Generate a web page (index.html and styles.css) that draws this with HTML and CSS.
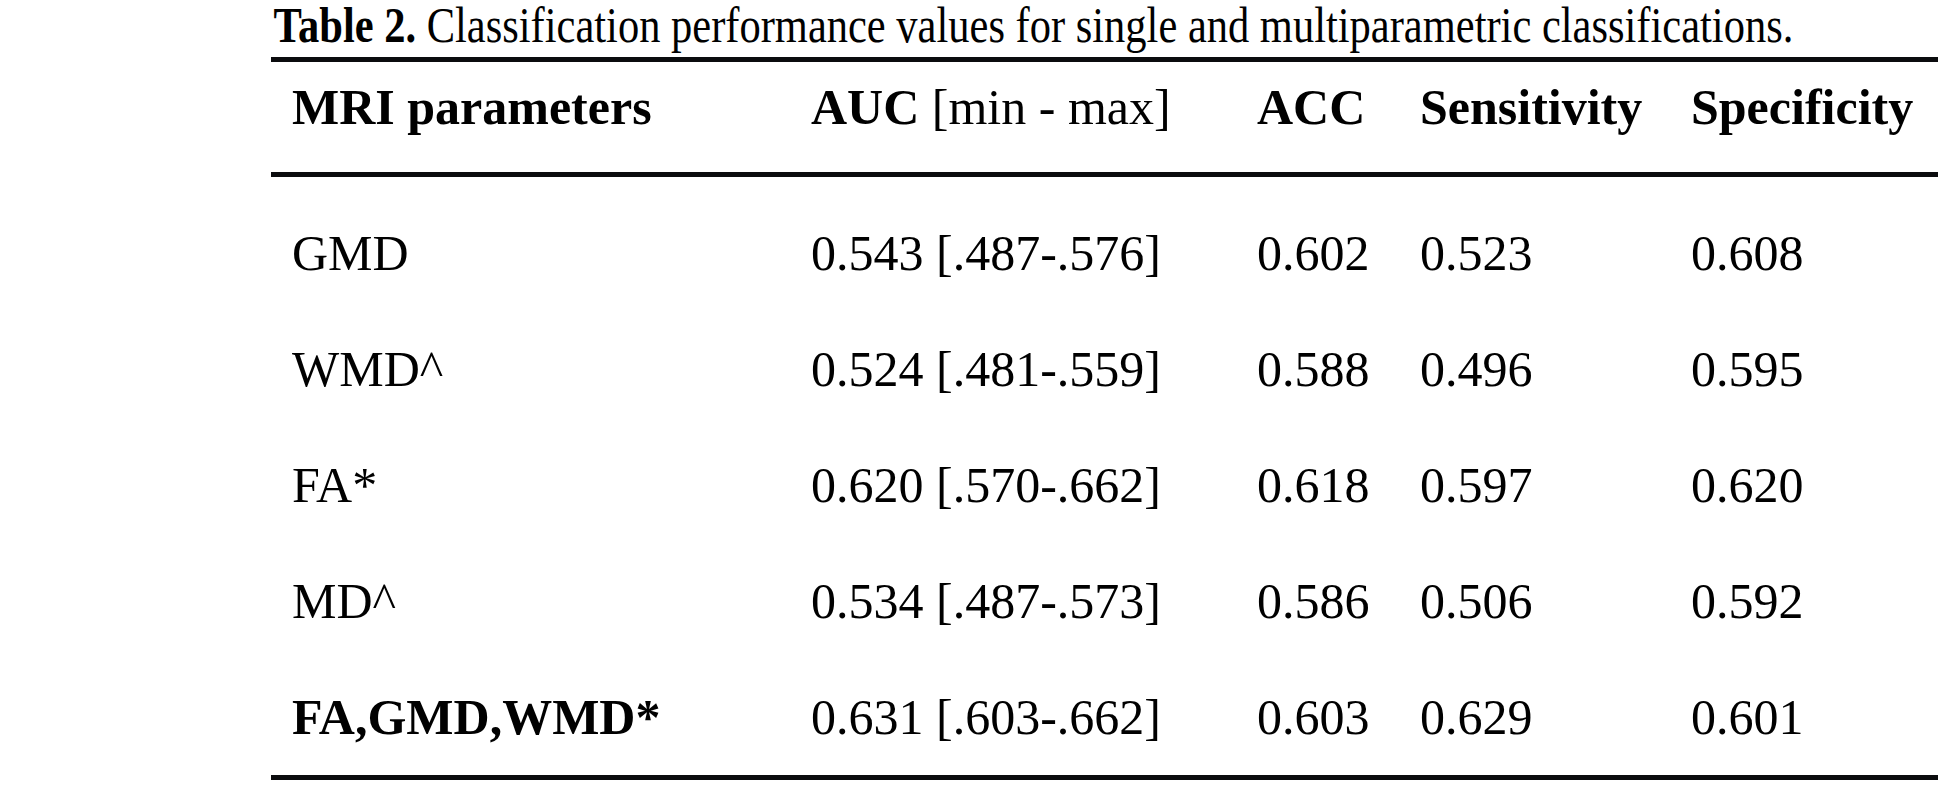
FILE: index.html
```html
<!DOCTYPE html>
<html lang="en">
<head>
<meta charset="utf-8">
<title>Table 2</title>
<link rel="stylesheet" href="styles.css">
</head>
<body>
<div class="page">
  <div class="caption"><b>Table 2.</b> Classification performance values for single and multiparametric classifications.</div>
  <div class="table">
    <div class="row head">
      <div class="c c1"><b>MRI parameters</b></div>
      <div class="c c2"><b>AUC</b> [min - max]</div>
      <div class="c c3"><b>ACC</b></div>
      <div class="c c4"><b>Sensitivity</b></div>
      <div class="c c5"><b>Specificity</b></div>
    </div>
    <div class="body">
      <div class="row">
        <div class="c c1">GMD</div>
        <div class="c c2">0.543 [.487-.576]</div>
        <div class="c c3">0.602</div>
        <div class="c c4">0.523</div>
        <div class="c c5">0.608</div>
      </div>
      <div class="row">
        <div class="c c1">WMD^</div>
        <div class="c c2">0.524 [.481-.559]</div>
        <div class="c c3">0.588</div>
        <div class="c c4">0.496</div>
        <div class="c c5">0.595</div>
      </div>
      <div class="row">
        <div class="c c1">FA*</div>
        <div class="c c2">0.620 [.570-.662]</div>
        <div class="c c3">0.618</div>
        <div class="c c4">0.597</div>
        <div class="c c5">0.620</div>
      </div>
      <div class="row">
        <div class="c c1">MD^</div>
        <div class="c c2">0.534 [.487-.573]</div>
        <div class="c c3">0.586</div>
        <div class="c c4">0.506</div>
        <div class="c c5">0.592</div>
      </div>
      <div class="row">
        <div class="c c1"><b>FA,GMD,WMD*</b></div>
        <div class="c c2">0.631 [.603-.662]</div>
        <div class="c c3">0.603</div>
        <div class="c c4">0.629</div>
        <div class="c c5">0.601</div>
      </div>
    </div>
  </div>
</div>
</body>
</html>
```
FILE: styles.css
```css
html, body {
  margin: 0;
  padding: 0;
  background: #ffffff;
}

body {
  font-family: "Liberation Serif", "Times New Roman", serif;
  color: #000000;
}

.page {
  margin-left: 271px;
  width: 1667px;
}

.caption {
  font-size: 50px;
  line-height: 50px;
  padding-left: 3px;
  margin-bottom: 7px;
  white-space: nowrap;
  transform: scaleX(0.85);
  transform-origin: left center;
}

.table {
  border-top: 5px solid #0b0c0e;
  border-bottom: 5px solid #0b0c0e;
}

.row {
  display: grid;
  grid-template-columns: 540px 446px 163px 271px 247px;
  font-size: 50px;
  line-height: 116px;
  white-space: nowrap;
}

.head {
  line-height: 90px;
  padding-bottom: 20px;
  border-bottom: 5px solid #0b0c0e;
}

.body {
  padding-top: 18px;
}

.c1 {
  padding-left: 21px;
}
```
